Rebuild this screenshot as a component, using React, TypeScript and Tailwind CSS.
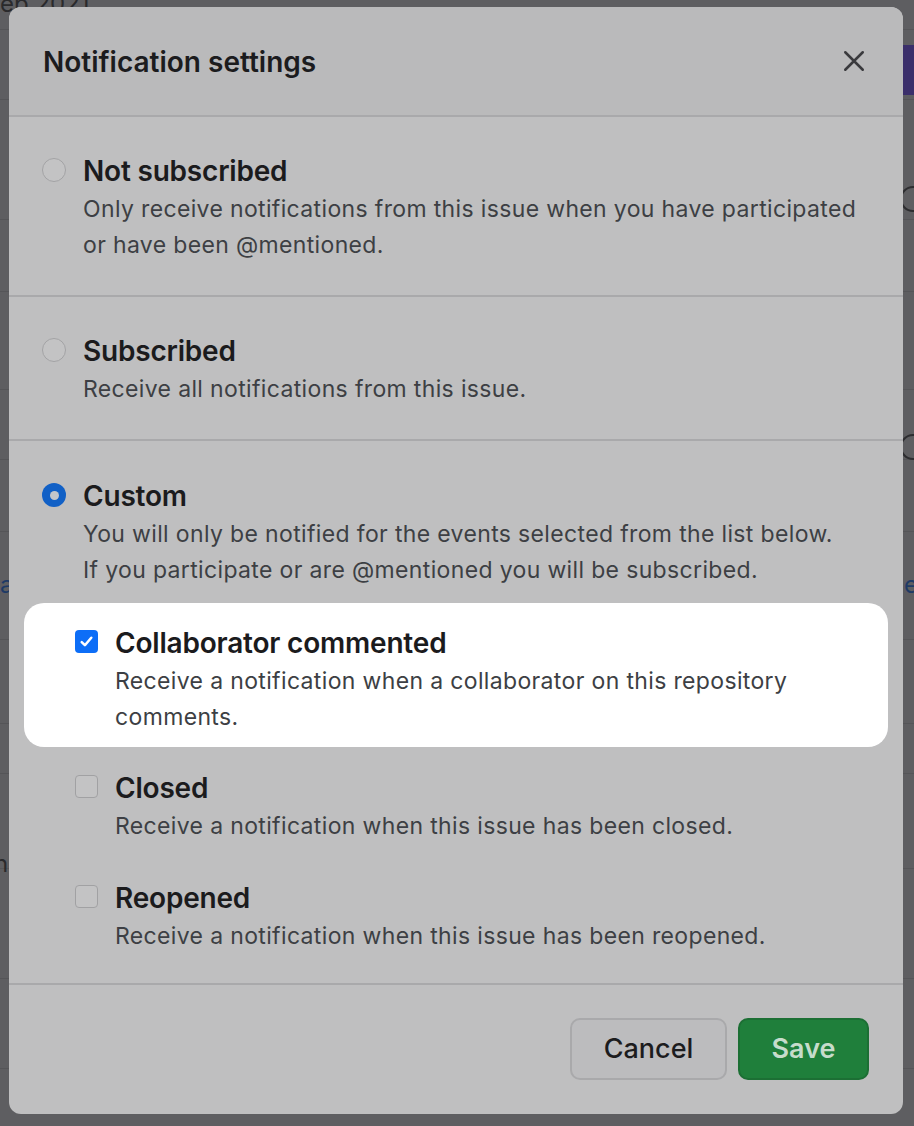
import type { FC, ReactNode } from "react"

const font = { fontFamily: "Inter, 'Noto Sans', 'Liberation Sans', sans-serif" }

const Radio: FC<{ checked?: boolean }> = ({ checked }) =>
    checked ? (
        <span className="mt-[5px] flex h-[24px] w-[24px] shrink-0 items-center justify-center rounded-full bg-[#1160c6]">
            <span className="h-[9px] w-[9px] rounded-full bg-[#c4c6ca]" />
        </span>
    ) : (
        <span className="mt-[5px] h-[24px] w-[24px] shrink-0 rounded-full border border-[#a3a3a5] bg-[#c3c3c4]" />
    )

const Checkbox: FC<{ checked?: boolean }> = ({ checked }) =>
    checked ? (
        <span className="mt-[5px] flex h-[23px] w-[23px] shrink-0 items-center justify-center rounded-[4px] bg-[#0d6ef7]">
            <svg viewBox="0 0 16 16" className="h-[17px] w-[17px]" fill="none" stroke="#fff" strokeWidth="2.4" strokeLinecap="round" strokeLinejoin="round">
                <path d="M3.5 8.5l3 3 6-7" />
            </svg>
        </span>
    ) : (
        <span className="mt-[5px] h-[23px] w-[23px] shrink-0 rounded-[4px] border border-[#a1a1a3] bg-[#c3c3c4]" />
    )

const Option: FC<{ control: ReactNode; title: string; children: ReactNode }> = ({ control, title, children }) => (
    <div className="flex gap-[17px]">
        {control}
        <div>
            <div className="text-[28px] leading-[36px] font-semibold tracking-[-0.2px] text-[#1b1b1d]">{title}</div>
            <div className="mt-[2px] text-[23px] leading-[36px] tracking-[0.35px] text-[#3d3f44]">{children}</div>
        </div>
    </div>
)

const BackdropRows: FC = () => (
    <div className="flex h-full flex-col">
        {[30, 70, 120, 72, 98, 70, 72, 108, 84, 50, 95, 110, 90, 60, 97].map((h, i) => (
            <div key={i} style={{ height: h }} className="shrink-0 border-b border-[#555558]" />
        ))}
    </div>
)

export default function App() {
    return (
        <div style={font} className="relative h-[1126px] w-[914px] overflow-hidden bg-[#5e5e61]">
            <BackdropRows />
            <div className="absolute left-0 top-[-14px] text-[24px] text-[#2a2a2c]">eb 2021</div>
            <div className="absolute right-0 top-[45px] h-[50px] w-[14px] bg-[#3b2f6b]" />
            <div className="absolute right-[-12px] top-[186px] h-[26px] w-[26px] rounded-full border-2 border-[#2d2d30]" />
            <div className="absolute right-[-12px] top-[434px] h-[26px] w-[26px] rounded-full border-2 border-[#2d2d30]" />
            <div className="absolute left-0 top-[567px] text-[24px] text-[#1e3a66]">a</div>
            <div className="absolute right-[-4px] top-[567px] text-[24px] text-[#1e3a66]">e</div>
            <div className="absolute left-[-6px] top-[846px] text-[24px] text-[#2a2a2c]">n</div>

            {/* dialog */}
            <div className="absolute left-[9px] top-[7px] flex h-[1107px] w-[894px] flex-col overflow-hidden rounded-[12px] bg-[#bfbfc0]">
                <div className="flex h-[110px] shrink-0 items-center justify-between border-b-2 border-[#a9a9ab] bg-[#bababb] pl-[34px] pr-[34px]">
                    <h1 className="pt-[2px] text-[28px] font-semibold text-[#1c1c1e]">Notification settings</h1>
                    <svg viewBox="0 0 24 24" className="h-[30px] w-[30px]" fill="none" stroke="#3a3a3d" strokeWidth="2" strokeLinecap="round">
                        <path d="M5 5l14 14M19 5L5 19" />
                    </svg>
                </div>

                <div className="shrink-0 border-b-2 border-[#a9a9ab] pb-[32px] pl-[33px] pr-[20px] pt-[36px]">
                    <Option control={<Radio />} title="Not subscribed">
                        Only receive notifications from this issue when you have participated
                        <br />
                        or have been @mentioned.
                    </Option>
                </div>

                <div className="shrink-0 border-b-2 border-[#a9a9ab] pb-[32px] pl-[33px] pr-[20px] pt-[36px]">
                    <Option control={<Radio />} title="Subscribed">
                        Receive all notifications from this issue.
                    </Option>
                </div>

                <div className="shrink-0 border-b-2 border-[#a9a9ab] pb-[16px] pt-[37px]">
                    <div className="pl-[33px] pr-[20px]">
                        <Option control={<Radio checked />} title="Custom">
                            You will only be notified for the events selected from the list below.
                            <br />
                            If you participate or are @mentioned you will be subscribed.
                        </Option>
                    </div>
                    <div className="mt-[15px] flex flex-col gap-[3px] px-[15px]">
                        <div className="rounded-[20px] bg-white pb-[12px] pl-[51px] pr-[20px] pt-[22px]">
                            <Option control={<Checkbox checked />} title="Collaborator commented">
                                Receive a notification when a collaborator on this repository
                                <br />
                                comments.
                            </Option>
                        </div>
                        <div className="pb-[13px] pl-[51px] pr-[20px] pt-[20px]">
                            <Option control={<Checkbox />} title="Closed">
                                Receive a notification when this issue has been closed.
                            </Option>
                        </div>
                        <div className="pb-[13px] pl-[51px] pr-[20px] pt-[20px]">
                            <Option control={<Checkbox />} title="Reopened">
                                Receive a notification when this issue has been reopened.
                            </Option>
                        </div>
                    </div>
                </div>

                <div className="flex flex-1 items-start justify-end gap-[11px] pr-[34px] pt-[33px]">
                    <button className="h-[62px] w-[157px] rounded-[10px] border-2 border-[#a9a9ab] bg-[#bcbcbe] text-[27px] font-medium text-[#1c1c1e]">
                        Cancel
                    </button>
                    <button className="h-[62px] w-[131px] rounded-[10px] border-2 border-[#1c6f34] bg-[#1f7f3b] text-[27px] font-semibold text-[#c6dccb]">
                        Save
                    </button>
                </div>
            </div>
        </div>
    )
}
